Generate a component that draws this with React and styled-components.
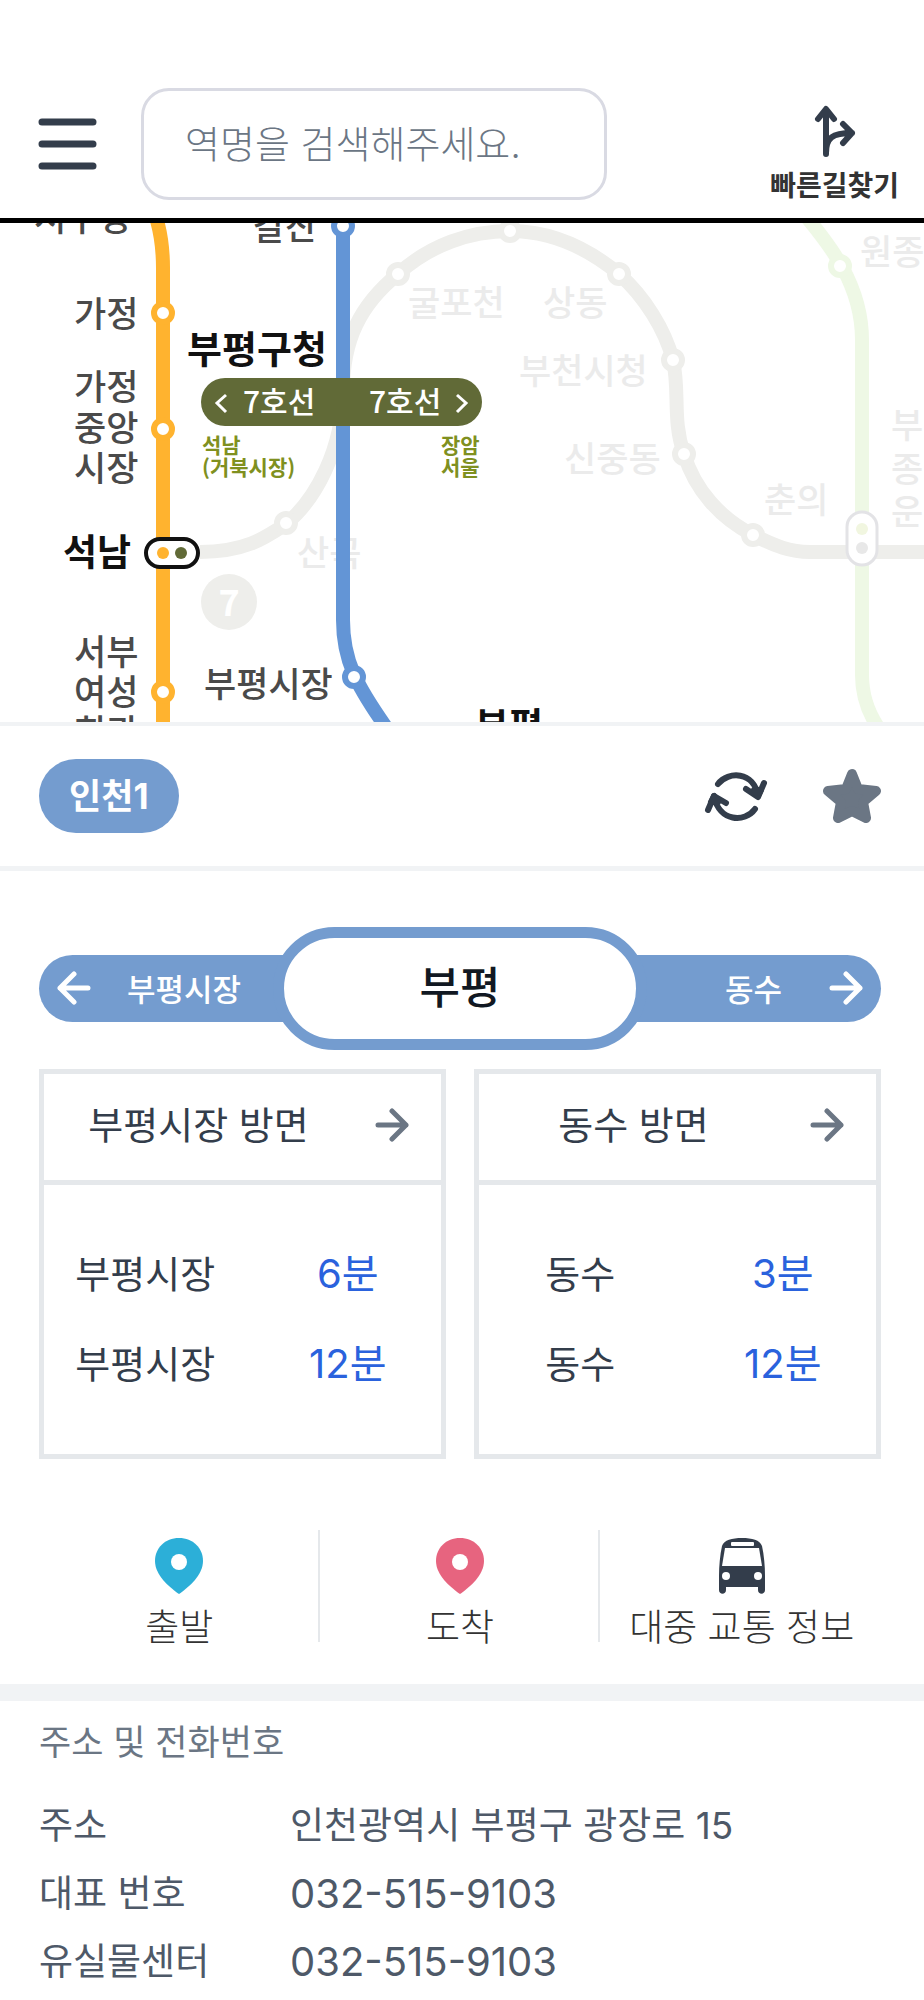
import React from 'react';
import styled, { createGlobalStyle } from 'styled-components';

const INK = '#333d4b';
const LINE_COLOR = '#749ccf';
const BORDER = '#e5e8eb';

const GlobalStyle = createGlobalStyle`
  *, *::before, *::after {
    box-sizing: border-box;
  }
  body {
    margin: 0;
    background: #fff;
    color: ${INK};
    font-family: Inter, 'Noto Sans CJK KR', sans-serif;
  }
  button, input {
    font-family: inherit;
    color: inherit;
  }
`;

const Header = styled.header`
  display: flex;
  justify-content: space-between;
  align-items: flex-start;
  padding: 88px 25px 18px 38px;
  border-bottom: 5px solid #000;
`;
const Search = styled.form`
  flex: 0 1 466px;
  margin: 0 auto 0 44px;
`;
const SearchInput = styled.input`
  display: block;
  width: 100%;
  height: 112px;
  padding: 0 41px;
  border: 3px solid #d9dae3;
  border-radius: 28px;
  background: #fff;
  font-size: 38px;
  font-weight: 300;
  &::placeholder {
    color: #6b7684;
    opacity: 1;
  }
`;
const IconButton = styled.button`
  display: flex;
  flex-flow: column nowrap;
  align-items: center;
  padding: 0;
  border: 0;
  background: none;
  margin-top: ${({ $top }) => $top || 0}px;
`;
const RouteLabel = styled.span`
  margin-top: 15px;
  font-size: 28px;
  line-height: 28px;
  font-weight: 700;
  color: #333;
`;

const Map = styled.svg`
  display: block;
  width: 100%;
  height: auto;
`;
const MapText = styled.text`
  font-family: 'Noto Sans CJK KR', sans-serif;
  font-size: ${({ $size }) => $size || 35}px;
  font-weight: ${({ $weight }) => $weight || 500};
  fill: ${({ $fill }) => $fill || '#4a4a4a'};
`;

const LineBar = styled.section`
  display: flex;
  align-items: center;
  gap: 55px;
  height: 149px;
  padding: 0 43px 0 39px;
  border-top: 4px solid #f1f3f5;
  border-bottom: 5px solid #f1f3f5;
`;
const LineBadge = styled.span`
  margin-right: auto;
  padding: 0 30px;
  border-radius: 38px;
  background: ${LINE_COLOR};
  color: #fff;
  font-size: 35px;
  line-height: 74px;
  font-weight: 700;
`;

const Station = styled.section`
  padding: 56px 43px 42px 39px;
`;
const StationNav = styled.nav`
  display: grid;
  grid-template-columns: 1fr 374px 1fr;
  align-items: center;
`;
const Neighbor = styled.a`
  display: flex;
  align-items: center;
  justify-content: space-between;
  height: 67px;
  padding: 0 18px 2px;
  background: ${LINE_COLOR};
  color: #fff;
  font-size: 31px;
  font-weight: 500;
  text-decoration: none;
`;
const Previous = styled(Neighbor)`
  margin-right: -20px;
  padding-right: 52px;
  border-radius: 38px 0 0 38px;
`;
const Next = styled(Neighbor)`
  margin-left: -20px;
  padding-left: 98px;
  border-radius: 0 38px 38px 0;
`;
const Current = styled.h1`
  position: relative;
  margin: 0;
  border: 11px solid ${LINE_COLOR};
  border-radius: 62px;
  background: #fff;
  color: #111822;
  font-size: 44px;
  line-height: 101px;
  font-weight: 500;
  text-align: center;
`;

const Cards = styled.div`
  display: grid;
  grid-template-columns: 1fr 1fr;
  gap: 28px;
  margin-top: 19px;
`;
const Card = styled.article`
  border: 5px solid ${BORDER};
`;
const CardHeader = styled.header`
  display: flex;
  align-items: center;
  height: 111px;
  padding: 0 32px 4px 0;
  border-bottom: 5px solid ${BORDER};
`;
const CardTitle = styled.h2`
  flex: 1;
  margin: 0;
  padding-right: 22px;
  font-size: 38px;
  line-height: 56px;
  font-weight: 400;
  text-align: center;
`;
const Arrivals = styled.table`
  width: 100%;
  margin: 44px 0 45px;
  table-layout: fixed;
  border-collapse: collapse;
  font-size: 38px;
  line-height: 50px;
  td, th {
    height: 90px;
    padding: 0 0 0 4px;
    font-weight: 400;
    text-align: center;
  }
  td {
    padding-left: 12px;
    color: #2a62dd;
    font-size: 40px;
  }
`;

const Actions = styled.div`
  display: grid;
  grid-template-columns: repeat(3, 1fr);
  margin-top: 71px;
`;
const Action = styled.button`
  display: flex;
  flex-flow: column nowrap;
  align-items: center;
  height: 112px;
  padding: 8px 0 0 2px;
  border: 0;
  border-right: 2px solid ${BORDER};
  background: none;
  color: #333;
  font-size: 37px;
  line-height: 56px;
  font-weight: 300;
  white-space: nowrap;
  &:last-child {
    border-right: 0;
  }
  svg {
    flex: none;
    margin-bottom: 6px;
  }
`;

const Info = styled.section`
  padding: 17px 39px 5px;
  border-top: 17px solid #f1f3f5;
`;
const InfoTitle = styled.h2`
  margin: 0 0 26px;
  color: #6b7684;
  font-size: 35px;
  line-height: 48px;
  font-weight: 400;
`;
const InfoTable = styled.table`
  width: 100%;
  border-collapse: collapse;
  color: #4e5968;
  font-size: 37px;
  line-height: 48px;
  th, td {
    height: 68px;
    padding: 0;
    font-weight: 400;
    text-align: left;
  }
  th {
    width: 251px;
  }
`;
const Phone = styled.a`
  color: inherit;
  font-size: 40px;
  text-decoration: none;
`;

const MenuIcon = () => (
  <svg width="59" height="52" viewBox="0 0 59 52" stroke={INK} strokeWidth="7" strokeLinecap="round">
    <path d="M4 4h51M4 26h51M4 48h51" />
  </svg>
);

const RouteIcon = () => (
  <svg width="46" height="52" viewBox="0 0 46 52" fill="none" stroke={INK} strokeWidth="6" strokeLinecap="round" strokeLinejoin="round">
    <path d="M14 49V5M6 14l8-10 8 10M14 48c0-15 6-20 26-20M31 19l9 9-9 10" />
  </svg>
);

const RefreshIcon = () => (
  <svg width="64" height="52" viewBox="0 0 64 52" fill="none" stroke={INK} strokeWidth="6" strokeLinecap="round" strokeLinejoin="round">
    <path d="M14 14C24 1 50 1 54 26M42 19l12 8 6-14" />
    <path d="M51 39C41 53 15 52 10 26M4 40l6-14 12 7" />
    <path d="M50 20l4 6 3-6zM14 32l-4-6-3 6z" fill={INK} />
  </svg>
);

const StarIcon = () => (
  <svg width="58" height="56" viewBox="0 0 58 56" fill="#6b7684" stroke="#6b7684" strokeWidth="10" strokeLinejoin="round">
    <path d="M29 6l6 15 18 2-13 11 3 16-14-7-14 7 3-16L5 23l18-2z" />
  </svg>
);

const ArrowIcon = ({ left, color = '#fff' }) => (
  <svg width="34" height="34" viewBox="0 0 34 34" fill="none" stroke={color} strokeWidth="5" strokeLinecap="round" strokeLinejoin="round">
    <path d={left ? 'M31 17H3M17 3L3 17l14 14' : 'M3 17h28M17 3l14 14-14 14'} />
  </svg>
);

const PinIcon = ({ color }) => (
  <svg width="48" height="56" viewBox="0 0 48 56">
    <path d="M24 0C10 0 0 10 0 23c0 14 14 26 24 33 10-7 24-19 24-33C48 10 38 0 24 0z" fill={color} />
    <circle cx="24" cy="24" r="8" fill="#fff" />
  </svg>
);

const BusIcon = () => (
  <svg width="48" height="56" viewBox="0 0 48 56">
    <path d="M4 8C6 2 14 0 24 0s18 2 20 8c2 9 3 20 3 30v14c0 5-7 5-7 0v-3H8v3c0 5-7 5-7 0V38C1 28 2 17 4 8z" fill={INK} />
    <rect x="13" y="4" width="23" height="4" rx="1" fill="#fff" />
    <path d="M7 10h34l3 18H4z" fill="#fff" />
    <circle cx="8" cy="38" r="4" fill="#fff" />
    <circle cx="40" cy="38" r="4" fill="#fff" />
  </svg>
);

const stops = {
  '#ffb32f': [[163, 313], [163, 429], [163, 692]],
  '#6395d6': [[343, 226], [354, 677]],
  '#eeeeeb': [[286, 523], [398, 274], [510, 231], [619, 274], [673, 360], [684, 454], [753, 535]],
  '#eef8e5': [[840, 266]],
};

const fadedNames = [
  ['굴포천', 408, 316], ['상동', 543, 316], ['부천시청', 519, 384], ['신중동', 564, 472],
  ['춘의', 764, 513], ['원종', 860, 265], ['부', 891, 438], ['종', 891, 482], ['운', 891, 525],
];

const names = [
  ['서구청', 34, 231], ['갈산', 253, 240], ['가정', 74, 327], ['가정', 74, 400], ['중앙', 74, 441],
  ['시장', 74, 481], ['서부', 74, 665], ['여성', 74, 705], ['회관', 74, 745], ['부평시장', 204, 697],
];

const directions = [
  ['석남', 202, 453], ['(거북시장)', 202, 475], ['장암', 441, 453], ['서울', 441, 475],
];

const SubwayMap = () => (
  <Map viewBox="0 223 924 499" role="img" aria-label="노선도">
    <g fill="none" strokeWidth="14">
      <path d="M200 552C245 552 265 538 286 524C315 500 343 450 343 390C343 340 360 305 398 274C430 245 470 231 510 231C555 231 590 250 619 274C645 297 665 330 673 360C680 392 672 420 684 454C695 490 720 518 753 535C775 546 790 552 810 552H930" stroke="#eeeeeb" />
      <path d="M804 214C830 245 862 285 862 340V675Q862 705 880 730" stroke="#eef8e5" />
    </g>
    <MapText x="297" y="566" $fill="#ebebeb">산곡</MapText>
    <g fill="none" strokeWidth="14">
      <path d="M155 214Q163 238 163 268V730" stroke="#ffb32f" />
      <path d="M343 226V620C343 660 356 685 388 730" stroke="#6395d6" />
    </g>
    {Object.entries(stops).map(([color, points]) => points.map(([x, y]) => (
      <circle key={`${x}-${y}`} cx={x} cy={y} r="9" fill="#fff" stroke={color} strokeWidth="6" />
    )))}

    {fadedNames.map(([name, x, y]) => (
      <MapText key={name} x={x} y={y} $fill="#ebebeb">{name}</MapText>
    ))}
    {names.map(([name, x, y]) => (
      <MapText key={`${name}${y}`} x={x} y={y}>{name}</MapText>
    ))}
    <MapText x="187" y="363" $size={38} $weight={700} $fill="#111">부평구청</MapText>
    <MapText x="63" y="566" $size={37} $weight={700} $fill="#111">석남</MapText>
    <MapText x="475" y="740" $size={37} $weight={700} $fill="#111">부평</MapText>

    <circle cx="229" cy="602" r="28" fill="#eeeeeb" />
    <MapText x="229" y="616" $size={36} $weight={700} $fill="#fff" textAnchor="middle">7</MapText>

    <rect x="201" y="378" width="281" height="48" rx="24" fill="#616a37" />
    <path d="M226 395l-9 8 9 9M457 395l9 8-9 9" fill="none" stroke="#fff" strokeWidth="3" />
    <MapText x="243" y="413" $size={30} $fill="#fff">7호선</MapText>
    <MapText x="369" y="413" $size={30} $fill="#fff">7호선</MapText>
    {directions.map(([name, x, y]) => (
      <MapText key={name} x={x} y={y} $size={21} $weight={700} $fill="#7f9020">{name}</MapText>
    ))}

    <rect x="146" y="539" width="52" height="28" rx="14" fill="#fff" stroke="#111" strokeWidth="4" />
    <circle cx="163" cy="553" r="6" fill="#ffb32f" />
    <circle cx="181" cy="553" r="6" fill="#616a37" />
    <rect x="847" y="512" width="30" height="53" rx="15" fill="#fff" stroke="#e3e3e6" strokeWidth="3" />
    <circle cx="862" cy="529" r="6" fill="#f1f6e0" />
    <circle cx="862" cy="548" r="6" fill="#e8e8e8" />
  </Map>
);

const ArrivalCard = ({ station, minutes }) => (
  <Card>
    <CardHeader>
      <CardTitle>{station} 방면</CardTitle>
      <ArrowIcon color="#6b7684" />
    </CardHeader>
    <Arrivals>
      <tbody>
        {minutes.map((m) => (
          <tr key={m}>
            <th scope="row">{station}</th>
            <td>{m}분</td>
          </tr>
        ))}
      </tbody>
    </Arrivals>
  </Card>
);

const phones = [
  ['대표 번호', '032-515-9103'],
  ['유실물센터', '032-515-9103'],
];

const App = () => (
  <>
    <GlobalStyle />
    <Header>
      <IconButton type="button" aria-label="메뉴" $top={30}>
        <MenuIcon />
      </IconButton>
      <Search role="search">
        <SearchInput type="text" aria-label="역명 검색" placeholder="역명을 검색해주세요." />
      </Search>
      <IconButton type="button" $top={17}>
        <RouteIcon />
        <RouteLabel>빠른길찾기</RouteLabel>
      </IconButton>
    </Header>
    <SubwayMap />
    <LineBar>
      <LineBadge>인천1</LineBadge>
      <IconButton type="button" aria-label="새로고침">
        <RefreshIcon />
      </IconButton>
      <IconButton type="button" aria-label="즐겨찾기">
        <StarIcon />
      </IconButton>
    </LineBar>
    <Station>
      <StationNav>
        <Previous href="#prev">
          <ArrowIcon left />
          부평시장
        </Previous>
        <Current>부평</Current>
        <Next href="#next">
          동수
          <ArrowIcon />
        </Next>
      </StationNav>
      <Cards>
        <ArrivalCard station="부평시장" minutes={[6, 12]} />
        <ArrivalCard station="동수" minutes={[3, 12]} />
      </Cards>
      <Actions>
        <Action type="button">
          <PinIcon color="#2cafd8" />
          출발
        </Action>
        <Action type="button">
          <PinIcon color="#e7647f" />
          도착
        </Action>
        <Action type="button">
          <BusIcon />
          대중 교통 정보
        </Action>
      </Actions>
    </Station>
    <Info>
      <InfoTitle>주소 및 전화번호</InfoTitle>
      <InfoTable>
        <tbody>
          <tr>
            <th scope="row">주소</th>
            <td>인천광역시 부평구 광장로 15</td>
          </tr>
          {phones.map(([label, number]) => (
            <tr key={label}>
              <th scope="row">{label}</th>
              <td>
                <Phone href={`tel:${number}`}>{number}</Phone>
              </td>
            </tr>
          ))}
        </tbody>
      </InfoTable>
    </Info>
  </>
);

export default App;
